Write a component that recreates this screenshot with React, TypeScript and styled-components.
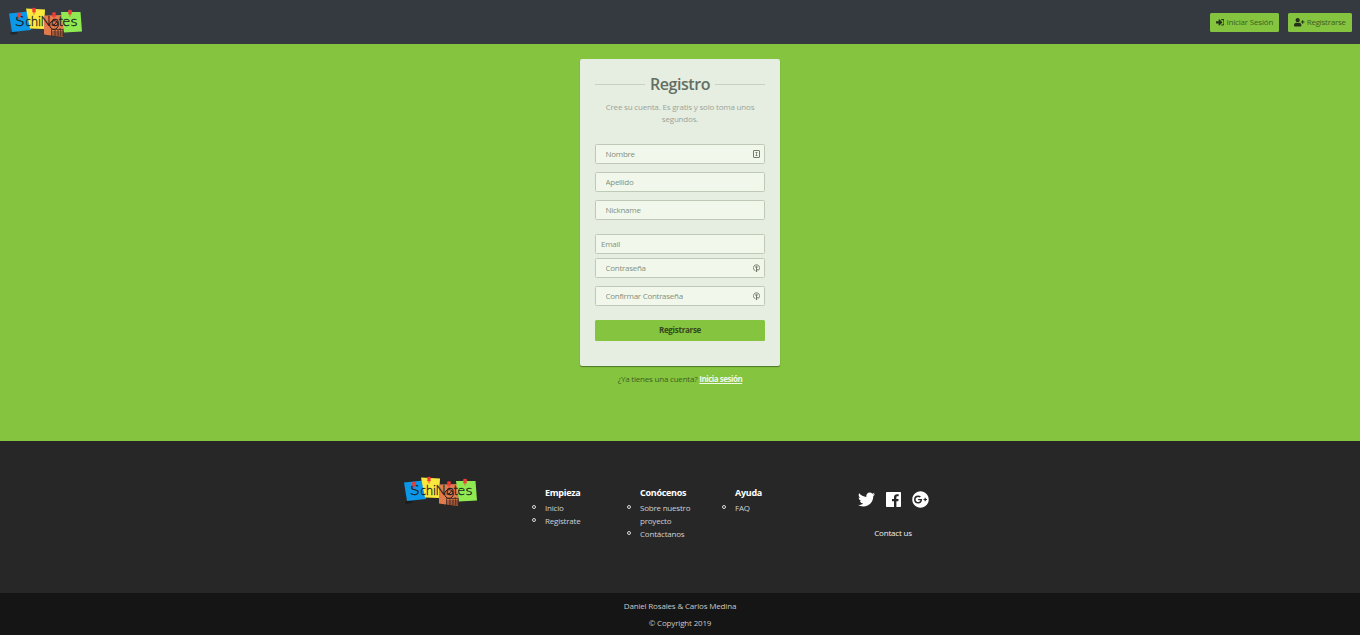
import React from 'react';
import styled, { createGlobalStyle } from 'styled-components';
import { FaSignInAlt, FaUserPlus, FaTwitter, FaGooglePlus } from 'react-icons/fa';

const GlobalStyle = createGlobalStyle`
  * { box-sizing: border-box; }
  body {
    margin: 0;
    background: #151515;
    font-family: 'Segoe UI', 'Open Sans', 'Noto Sans', sans-serif;
    font-size: 8px;
    line-height: 12px;
    color: #212529;
  }
  h1, h2, p, ul { margin: 0; padding: 0; }
`;

const Page = styled.div`
  display: flex;
  flex-direction: column;
  height: 635px;
`;

const Header = styled.header`
  display: flex;
  align-items: center;
  justify-content: space-between;
  height: 44px;
  padding: 0 8px;
  background: #343a40;
`;

const Nav = styled.nav`
  display: flex;
  gap: 9px;
`;

const NavButton = styled.button<{ $width: number; $spacing: number }>`
  display: flex;
  align-items: center;
  justify-content: center;
  gap: 2px;
  width: ${(p) => p.$width}px;
  height: 19px;
  padding: 0;
  border: 0;
  border-radius: 1.5px;
  background: #84c43e;
  color: #3f5c24;
  font: inherit;
  letter-spacing: ${(p) => p.$spacing}px;
  white-space: nowrap;
  svg { color: #24321a; flex: none; }
`;

const Main = styled.main`
  display: flex;
  flex-direction: column;
  align-items: center;
  height: 397px;
  padding-top: 15px;
  background: #84c43e;
`;

const Card = styled.form`
  width: 200px;
  height: 307px;
  padding: 14px 15px 15px;
  border-radius: 2px;
  background: #e6ede1;
  box-shadow: 0 1px 1px rgba(0, 0, 0, 0.4);
`;

const Title = styled.h1`
  display: flex;
  align-items: center;
  gap: 5px;
  height: 22px;
  color: #636f62;
  font-size: 16px;
  font-weight: 600;
  line-height: 22px;
  letter-spacing: -0.42px;
  &::before, &::after {
    content: '';
    flex: 1;
    height: 1px;
    background: #c6cfc2;
  }
`;

const Intro = styled.p`
  margin: 6px 0 19px;
  color: #9ba599;
  text-align: center;
  letter-spacing: -0.19px;
`;

const Field = styled.label<{ $gap: number; $indent?: number }>`
  display: flex;
  align-items: center;
  height: 20px;
  margin-bottom: ${(p) => p.$gap}px;
  padding: 0 4px 0 ${(p) => p.$indent ?? 9.5}px;
  border: 1px solid #bfc9b8;
  border-radius: 1.5px;
  background: #f1f8eb;
`;

const Input = styled.input`
  flex: 1;
  min-width: 0;
  height: 18px;
  padding: 0 0 2px;
  border: 0;
  outline: 0;
  background: transparent;
  font: inherit;
  letter-spacing: -0.28px;
  &::placeholder { color: #849080; opacity: 1; }
`;

const Submit = styled.button`
  width: 100%;
  height: 21px;
  padding: 0 0 1px;
  border: 0;
  border-radius: 1.5px;
  background: #84c43e;
  color: #34481f;
  font: inherit;
  font-weight: 700;
  letter-spacing: -0.28px;
`;

const Login = styled.p`
  margin-top: 7px;
  color: #3f5f22;
  letter-spacing: -0.21px;
  a { color: #f0f8e8; font-weight: 700; letter-spacing: -0.48px; text-decoration: underline; }
`;

const Footer = styled.footer`
  display: flex;
  height: 152px;
  padding-left: 403px;
  background: #272727;
`;

const FooterLogo = styled.div`
  width: 127px;
  padding-top: 34px;
`;

const Column = styled.section<{ $width: number }>`
  width: ${(p) => p.$width}px;
  padding: 45px 0 0 15px;
`;

const ColumnTitle = styled.h2`
  height: 15px;
  color: #fff;
  font-size: 9px;
  line-height: 13px;
  letter-spacing: -0.28px;
`;

const Links = styled.ul`
  width: 64px;
  list-style: none;
  color: #d0d0d0;
  line-height: 13px;
  letter-spacing: -0.21px;
  li { position: relative; }
  li::before {
    content: '';
    position: absolute;
    box-sizing: border-box;
    left: -13px;
    top: 4px;
    width: 4px;
    height: 4px;
    border: 1px solid #d8d8d8;
    border-radius: 50%;
  }
`;

const Social = styled.section`
  display: flex;
  flex-direction: column;
  align-items: center;
  width: 72px;
  margin-left: 42px;
  padding-top: 50px;
  color: #eee;
  letter-spacing: -0.2px;
`;

const SocialIcons = styled.div`
  display: flex;
  align-items: center;
  justify-content: space-between;
  width: 71px;
  height: 17px;
  margin: 0 0 19px 1px;
  color: #fff;
`;

const Legal = styled.div`
  height: 42px;
  padding-top: 4px;
  background: #151515;
  color: #c8c8c8;
  text-align: center;
  line-height: 17px;
  letter-spacing: -0.17px;
`;

const letters: [string, number, number][] = [
  ['S', 7, 9.5],
  ['c', 17.5, 5.5],
  ['h', 23, 7],
  ['i', 30, 3],
  ['N', 32.5, 10],
  ['o', 43, 8],
  ['t', 50.5, 4.5],
  ['e', 54.5, 7.5],
  ['s', 62.5, 7],
];

const pins = [[11, 8], [26, 3], [46, 7.5], [62, 5]];

const Logo = () => (
  <svg width="75" height="32" viewBox="0 0 75 32" aria-label="Schinotes">
    <path d="M2 26 L10 26 L9 28 L3 29Z M36 27 L55 30 L54 31.5 L36 28.5Z" fill="#000" opacity=".3" />
    <path d="M1 7.5 L20 5.5 L23 24 L4 26Z" fill="#0c97e8" />
    <path d="M18 2.5 L37 3.5 L36 23 L22 22.5Z" fill="#fbe83d" />
    <path d="M36 9.5 L56 9 L55 31 Q46 30 36 28.5Z" fill="#df7b4d" />
    <path d="M53 6 L72.5 6 L74 25.5 L56 26.5Z" fill="#91e952" />
    <g fill="none" stroke="#2b1b17" strokeWidth="1">
      <circle cx="46" cy="19" r="4.3" />
      <path d="M46 19 L48.5 16 M46 19 H43.5" />
      <path d="M43.5 23.5 H55 V30 H43.5Z M52 22 V24 M44 26 H55 M44 28 H55 M47 24 V30 M50 24 V30 M52.7 24 V30" strokeWidth=".7" />
    </g>
    <g fontFamily="Lato, sans-serif" fontSize="14" fontWeight="300" fill="#15191c" stroke="#15191c" strokeWidth=".3">
      {letters.map(([letter, x, width]) => (
        <text key={letter} x={x} y="20" textLength={width} lengthAdjust="spacingAndGlyphs">{letter}</text>
      ))}
    </g>
    {pins.map(([x, y]) => (
      <g key={x} fill="#ed3b35">
        <ellipse cx={x} cy={y} rx="2" ry="1.3" />
        <path d={`M${x - 1.2} ${y} H${x + 1.2} L${x + 1.9} ${y + 3.3} H${x - 1.9}Z M${x - 0.4} ${y + 3} H${x + 0.4} V${y + 5.5} H${x - 0.4}Z`} />
      </g>
    ))}
  </svg>
);

const CardIcon = () => (
  <svg width="7" height="8" viewBox="0 0 7 8" fill="none" stroke="#727b6d">
    <rect x=".5" y=".5" width="6" height="7" rx=".5" />
    <path d="M3.5 2V6M2.5 2.5H4.5M2.5 5.5H4.5" strokeWidth=".8" />
  </svg>
);

const KeyIcon = () => (
  <svg width="7" height="8" viewBox="0 0 7 8" fill="none" stroke="#727b6d">
    <path d="M2.5 6.8A3.1 3.1 0 1 1 4.5 6.8" strokeWidth=".9" />
    <circle cx="3.5" cy="3" r=".8" />
    <path d="M3.5 3V8M3.5 5.5H4.8" />
  </svg>
);

const FacebookIcon = () => (
  <svg width="15" height="15" viewBox="0 0 15 15">
    <path fill="#fff" fillRule="evenodd" d="M.8 0H14.2Q15 0 15 .8V14.2Q15 15 14.2 15H10.4V9.2H12.3L12.6 6.9H10.4V5.5C10.4 4.8 10.6 4.3 11.5 4.3H12.7V2.3C12.5 2.2 11.8 2.2 11 2.2C9.2 2.2 8 3.3 8 5.2V6.9H6V9.2H8V15H.8Q0 15 0 14.2V.8Q0 0 .8 0Z" />
  </svg>
);

export default function App() {
  return (
    <Page>
      <GlobalStyle />
      <Header>
        <Logo />
        <Nav>
          <NavButton $width={69} $spacing={-0.18}><FaSignInAlt size={8.5} />Iniciar Sesión</NavButton>
          <NavButton $width={64} $spacing={-0.25}><FaUserPlus size={10.5} />Registrarse</NavButton>
        </Nav>
      </Header>
      <Main>
        <Card>
          <Title>Registro</Title>
          <Intro>Cree su cuenta. Es gratis y solo toma unos segundos.</Intro>
          <Field $gap={8}><Input placeholder="Nombre" /><CardIcon /></Field>
          <Field $gap={8}><Input placeholder="Apellido" /></Field>
          <Field $gap={14}><Input placeholder="Nickname" /></Field>
          <Field $gap={4} $indent={5}><Input placeholder="Email" /></Field>
          <Field $gap={8}><Input placeholder="Contraseña" /><KeyIcon /></Field>
          <Field $gap={14}><Input placeholder="Confirmar Contraseña" /><KeyIcon /></Field>
          <Submit type="button">Registrarse</Submit>
        </Card>
        <Login>¿Ya tienes una cuenta? <a>Inicia sesión</a></Login>
      </Main>
      <Footer>
        <FooterLogo><Logo /></FooterLogo>
        <Column $width={95}>
          <ColumnTitle>Empieza</ColumnTitle>
          <Links><li>Inicio</li><li>Registrate</li></Links>
        </Column>
        <Column $width={95}>
          <ColumnTitle>Conócenos</ColumnTitle>
          <Links><li>Sobre nuestro proyecto</li><li>Contáctanos</li></Links>
        </Column>
        <Column $width={95}>
          <ColumnTitle>Ayuda</ColumnTitle>
          <Links><li>FAQ</li></Links>
        </Column>
        <Social>
          <SocialIcons><FaTwitter size={17} /><FacebookIcon /><FaGooglePlus size={17} /></SocialIcons>
          <span>Contact us</span>
        </Social>
      </Footer>
      <Legal>
        <p>Daniel Rosales &amp; Carlos Medina</p>
        <p>© Copyright 2019</p>
      </Legal>
    </Page>
  );
}
